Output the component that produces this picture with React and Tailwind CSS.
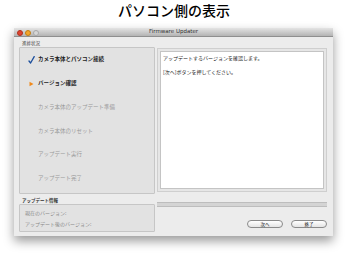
import React from "react";

const jp = { fontFamily: '"Noto Sans CJK JP", "Noto Sans", sans-serif' };

function Check() {
  return (
    <svg width="7" height="8" viewBox="0 0 7 8" className="shrink-0">
      <path d="M1 5 L2.6 7 L6.2 0.6" fill="none" stroke="#1d4f9c" strokeWidth="1.3" strokeLinecap="round" strokeLinejoin="round" />
    </svg>
  );
}

function Arrow() {
  return (
    <svg width="7" height="6" viewBox="0 0 7 6" className="shrink-0">
      <path d="M1.5 0.8 L5.5 3 L1.5 5.2 Z" fill="#f08a1c" />
    </svg>
  );
}

function Step({ icon, label, active }) {
  return (
    <div className="h-[23.8px] flex items-center pl-[5px]">
      <div className="w-[13px] flex items-center justify-center">{icon}</div>
      <span
        className={`text-[5.5px] leading-none ${active ? "text-[#222] font-bold" : "text-[#9a9a9a]"}`}
      >
        {label}
      </span>
    </div>
  );
}

function Button({ children }) {
  return (
    <div className="w-[36px] h-[8px] rounded-full border border-[#8a8a8a] bg-gradient-to-b from-white to-[#e4e4e4] flex items-center justify-center text-[4.5px] leading-none text-[#222]">
      {children}
    </div>
  );
}

export default function App() {
  return (
    <div className="w-[348px] h-[260px] bg-white overflow-hidden" style={jp}>
      {/* heading */}
      <div className="h-[28px] pt-[1px] text-center text-[14px] leading-[18px] font-medium text-black">
        パソコン側の表示
      </div>

      {/* window */}
      <div className="ml-[14px] w-[319px] h-[208px] bg-[#ececec] shadow-[0_5px_10px_rgba(0,0,0,0.4)] flex flex-col">
        {/* title bar */}
        <div className="relative h-[9px] bg-gradient-to-b from-[#e4e4e4] to-[#b4b4b4] border-b border-[#8f8f8f] flex items-center justify-center">
          <div className="absolute left-[3px] top-[1.5px] flex gap-[2px]">
            <div className="w-[6px] h-[6px] rounded-full bg-[#e0442e] border border-[#b0301e]" />
            <div className="w-[6px] h-[6px] rounded-full bg-[#f3a52a] border border-[#c27d12]" />
            <div className="w-[6px] h-[6px] rounded-full bg-[#d6d6d6] border border-[#a8a8a8]" />
          </div>
          <span className="text-[5.5px] leading-none text-[#333]" style={{ fontFamily: '"DejaVu Sans", sans-serif' }}>
            Firmware Updater
          </span>
        </div>

        {/* body */}
        <div className="flex-1 flex gap-[2px] pl-[5px] pr-[6px] pt-[2px]">
          {/* left column */}
          <div className="w-[136px] flex flex-col">
            <div className="h-[8px] pl-[3px] text-[4.5px] leading-[8px] text-[#444]">進捗状況</div>
            <div className="h-[147px] bg-[#e2e2e2] border border-[#c6c6c6] rounded-[1px]">
              <Step icon={<Check />} label="カメラ本体とパソコン接続" active />
              <Step icon={<Arrow />} label="バージョン確認" active />
              <Step label="カメラ本体のアップデート準備" />
              <Step label="カメラ本体のリセット" />
              <Step label="アップデート実行" />
              <Step label="アップデート完了" />
            </div>
            <div className="h-[10px] pt-[3px] pl-[3px] text-[4.5px] leading-[7px] text-[#333] font-bold">アップデート情報</div>
            <div className="h-[28px] bg-[#e2e2e2] border border-[#c6c6c6] rounded-[1px] pl-[5px] pt-[4px] flex flex-col gap-[3px] text-[5px] leading-[8px] text-[#8a8a8a]">
              <div>現在のバージョン:</div>
              <div>アップデート後のバージョン:</div>
            </div>
          </div>

          {/* right column */}
          <div className="w-[170px] flex flex-col pt-[9px]">
            <div className="h-[144px] border border-[#cfcfcf] bg-[#e6e6e6] p-[2px]">
              <div className="h-full bg-white border border-[#c4c4c4] pl-[2px] pt-[2px] text-[5px] leading-[7px] text-[#222]">
                <div>アップデートするバージョンを確認します。</div>
                <div className="mt-[7px]">[次へ]ボタンを押してください。</div>
              </div>
            </div>
            <div className="mt-[10px] h-[5px] border-y border-[#bdbdbd] bg-[#d4d4d4]" />
            <div className="mt-[13px] flex justify-end gap-[8px]">
              <Button>次へ</Button>
              <Button>終了</Button>
            </div>
          </div>
        </div>
      </div>
    </div>
  );
}
